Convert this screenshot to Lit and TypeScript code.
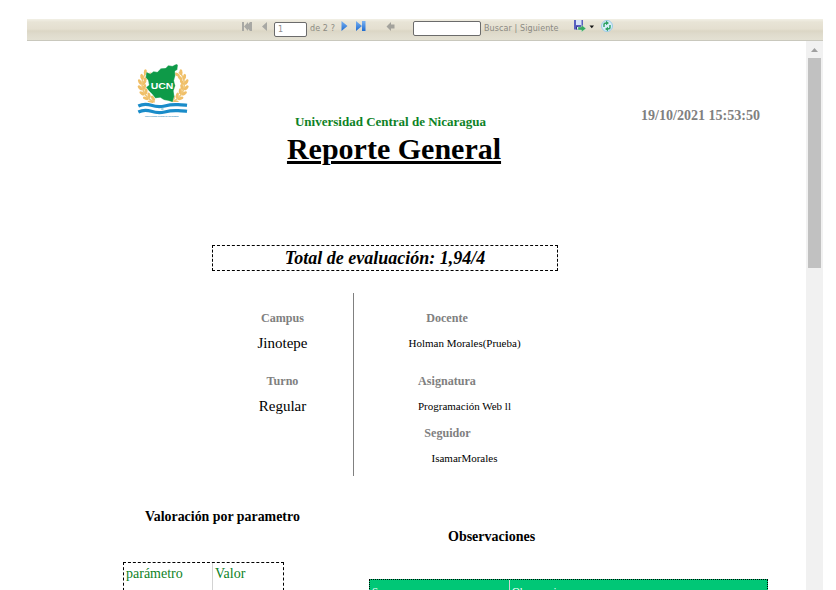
import { LitElement, html, css, svg } from "lit";
import { customElement } from "lit/decorators.js";

const grains = [
  [82, 69, 30], [72, 81, 15], [66, 95, 0], [66, 111, -15], [71, 126, -30], [81, 140, -45], [94, 150, -60],
];

@customElement("ucn-logo")
class UcnLogo extends LitElement {
  static styles = css`
    :host { display: block; width: 52px; height: 58px; }
    .logo { display: block; width: 52px; height: 58px; }
    .name { font: bold 29px "Liberation Sans", Arial, sans-serif; fill: #fff; }
    .motto { font: bold 6.5px "Liberation Sans", Arial, sans-serif; fill: #3f8fc0; }
  `;
  render() {
    const sprig = () => svg`
      <path d="M82 66C58 88 58 135 104 157" fill="none" stroke="#f0c878" stroke-width="5"/>
      ${grains.map(
        ([x, y, r]) => svg`<g transform="translate(${x} ${y}) rotate(${r})" fill="#f0bf68">
          <ellipse cx="-6" cy="-2" rx="4.600" ry="9" transform="rotate(-28)"/>
          <ellipse cx="7" cy="-2" rx="4.600" ry="9" transform="rotate(30)"/></g>`
      )}`;
    return html`<svg class="logo" viewBox="51 36 156 174">
      ${sprig()}
      <g transform="translate(259 0) scale(-1 1)">${sprig()}</g>
      <path fill="#0e9a48" stroke="#fff" stroke-width="1" d="M79 66L91 71L101 64L112 66L123 55L137 54L145 46L157 48L169 42L174 45L172 59L165 64L166 77L162 92L166 107L161 122L163 139L158 157L147 153L132 150L121 143L106 145L96 132L87 123L78 112L87 105L84 91L77 82Z"/>
      <text class="name" x="92" y="118" textLength="68" lengthAdjust="spacingAndGlyphs">UCN</text>
      <path fill="#fff" d="M55 160Q73 151 94 158T134 160T174 156T201 158V192H55z"/>
      <g fill="none" stroke="#1a8cc9" stroke-width="9.500">
        <path d="M55 168Q73 159 94 166T134 168T174 164T201 166"/>
        <path d="M55 186Q73 177 94 184T134 186T174 182T201 184"/>
      </g>
      <circle cx="127" cy="177" r="4" fill="#a9d7df"/>
      <text class="motto" x="75" y="200" textLength="100" lengthAdjust="spacingAndGlyphs">Universidad Central de Nicaragua</text>
    </svg>`;
  }
}

@customElement("report-toolbar")
class ReportToolbar extends LitElement {
  static styles = css`
    :host { display: block; }
    .bar {
      display: flex; align-items: flex-start; box-sizing: border-box;
      height: 22px; padding-left: 215px;
      border-bottom: 1px solid #c9c8bd;
      background: linear-gradient(#f2f0e6 0, #e8e4d6 3px, #e4dfd0 10px, #dbd6c5 12px, #dfdbcc 15px, #e4e1d3 21px);
      font: 8px/10px "DejaVu Sans", Verdana, sans-serif; color: #8b8a83;
    }
    .icon { display: block; flex: none; }
    .box {
      box-sizing: border-box; flex: none; height: 15px; margin-top: 3px; padding: 2px 3px 0;
      border: 1px solid #6b6b6b; border-radius: 2px; background: #fff; line-height: 10px; color: #8d8d8d;
    }
    .page { width: 33px; margin-left: 5px; }
    .find { width: 68px; margin-left: 15px; margin-top: 2px; }
    .txt { flex: none; margin: 5px 0 0 3px; white-space: pre; }
    .pages { width: 29px; letter-spacing: 0.1px; }
    .links { width: 87px; letter-spacing: 0.1px; }
  `;
  render() {
    return html`<div class="bar">
      <svg class="icon" width="27" height="15" viewBox="0 0 27 15" fill="#a8a8a4">
        <path d="M0 3h2v9H0zM6 3v9L2 7.500zM8 3h2v9H8zM8 3v9L4 7.500zM25 3v9l-5-4.500z" />
      </svg>
      <span class="box page">1</span>
      <span class="txt pages">de 2 ?</span>
      <svg class="icon" width="59" height="16" viewBox="0 0 59 16">
        <defs><linearGradient id="b" x2="0" y2="1"><stop stop-color="#7ab2f2"/><stop offset="1" stop-color="#1f6bd0"/></linearGradient></defs>
        <path fill="url(#b)" d="M2.500 2l6 5-6 5zM17 2l6 5-6 5zM23 2h3.500v10H23z"/>
        <path fill="#a3a29c" d="M47.500 7.500L52 3v2.500h3.500v4H52V12z"/>
      </svg>
      <span class="box find"></span>
      <span class="txt links">Buscar | Siguiente</span>
      <svg class="icon" width="56" height="16" viewBox="0 0 56 16">
        <path fill="#5a5fc0" d="M3 1h9v9.500H3z"/>
        <path fill="#d8e4f8" d="M5 1h5.500v5H5z"/>
        <path fill="#30358c" d="M5 7.500h5v3H5z"/>
        <path fill="#e8eaf5" d="M6 8h1.500v2.500H6z"/>
        <path fill="#36a861" stroke="#d7eed8" stroke-width=".4" d="M7 8h3.500V6L15 9.500 10.500 13v-2H7z"/>
        <path fill="#151515" d="M18.500 6.500h4.500L20.800 9.200z"/>
        <circle cx="36" cy="7" r="5.500" fill="#d9effb" stroke="#9ccbe8"/>
        <path fill="none" stroke="#2da060" stroke-width="1.400" d="M33 8V5.500q0-1.500 2.500-1.500M39 6v2.500q0 1.500-2.500 1.500"/>
        <path fill="#2da060" d="M35 1.800L38 4l-3 2.200zM37 7.800L34 10l3 2.200z"/>
      </svg>
    </div>`;
  }
}

@customElement("app-root")
class AppRoot extends LitElement {
  static styles = css`
    :host {
      display: block; box-sizing: border-box; width: 836px; height: 590px; overflow: hidden;
      padding: 19px 13px 0 27px; background: #fff;
      font-family: "Liberation Serif", "Times New Roman", serif; color: #000;
    }
    .view { display: flex; height: 549px; }
    .report { width: 779px; flex: none; height: 549px; overflow: hidden; white-space: nowrap; }
    .scroll { width: 17px; background: #f1f1f1; }
    .arrow { display: block; width: 17px; height: 17px; }
    .thumb { width: 13px; height: 210px; margin: 0 2px; background: #c1c1c1; }
    .head { display: flex; height: 204px; }
    .logo { flex: none; margin: 21px 0 0 110px; }
    .titles { flex: none; width: 260px; margin: 73px 0 0 75px; text-align: center; }
    .org { font: bold 13px/16px "Liberation Serif", serif; color: #0d8226; margin-right: 7px; }
    .title {
      font: bold 30px/38px "Liberation Serif", serif; text-decoration: underline;
      text-decoration-thickness: 3px; text-underline-offset: 2px;
    }
    .date { flex: none; margin: 66px 0 0 117px; font: bold 14.05px/16px "Liberation Serif", serif; color: #808080; }
    .total {
      box-sizing: border-box; width: 346px; height: 26px; margin-left: 185px; border: 1px dashed #000;
      font: italic bold 18px/25px "Liberation Serif", serif; text-align: center;
    }
    .info { display: flex; margin: 22px 0 0 185px; height: 183px; }
    .left { box-sizing: border-box; width: 142px; padding-top: 17px; border-right: 1px solid #808080; text-align: center; }
    .right { width: 185px; padding: 17px 0 0 18px; text-align: center; }
    .label { font: bold 12.1px/16px "Liberation Serif", serif; color: #808080; }
    .value { font-size: 15px; line-height: 18px; margin-top: 8px; }
    .gap { margin-top: 21px; }
    .right .label { width: 150px; }
    .right .value { font-size: 11px; width: 185px; }
    .right .last { width: 151px; margin-top: 10px; }
    .tables { display: flex; margin-left: 96px; }
    .params { width: 161px; padding-top: 33px; }
    .obs { width: 399px; margin-left: 85px; padding-top: 53px; }
    .h { font: bold 14px/16px "Liberation Serif", serif; }
    .h-params { margin-left: 22px; font-size: 13.9px; }
    .h-obs { margin-left: 79px; }
    .tp {
      display: flex; box-sizing: border-box; height: 60px; margin-top: 37px;
      border: 1px dashed #000; font-size: 14px; line-height: 16px; color: #0d8226;
    }
    .tp .cell { padding: 3px 0 0 2px; }
    .tp .first { width: 86px; border-right: 1px solid #d3d3d3; }
    .to {
      display: flex; box-sizing: border-box; height: 40px; margin-top: 34px; border: 1px dotted #000;
      background: #00c776; color: #fff; font-size: 11px; line-height: 13px;
    }
    .to .cell { padding: 5px 0 0 2px; }
    .to .first { width: 137px; border-right: 1px solid #d3d3d3; }
  `;
  render() {
    return html`
      <report-toolbar></report-toolbar>
      <div class="view">
        <div class="report">
          <div class="head">
            <ucn-logo class="logo"></ucn-logo>
            <div class="titles">
              <div class="org">Universidad Central de Nicaragua</div>
              <div class="title">Reporte General</div>
            </div>
            <div class="date">19/10/2021 15:53:50</div>
          </div>
          <div class="total">Total de evaluación: 1,94/4</div>
          <div class="info">
            <div class="left">
              <div class="label">Campus</div>
              <div class="value">Jinotepe</div>
              <div class="label gap">Turno</div>
              <div class="value">Regular</div>
            </div>
            <div class="right">
              <div class="label">Docente</div>
              <div class="value">Holman Morales(Prueba)</div>
              <div class="label gap">Asignatura</div>
              <div class="value">Programación Web ll</div>
              <div class="label last">Seguidor</div>
              <div class="value">IsamarMorales</div>
            </div>
          </div>
          <div class="tables">
            <div class="params">
              <div class="h h-params">Valoración por parametro</div>
              <div class="tp">
                <div class="cell first">parámetro</div>
                <div class="cell">Valor</div>
              </div>
            </div>
            <div class="obs">
              <div class="h h-obs">Observaciones</div>
              <div class="to">
                <div class="cell first">S</div>
                <div class="cell">Observaciones</div>
              </div>
            </div>
          </div>
        </div>
        <div class="scroll">
          <svg class="arrow" viewBox="0 0 17 17"><path d="M5 11h7L8.500 7z" fill="#a0a0a0"/></svg>
          <div class="thumb"></div>
        </div>
      </div>`;
  }
}
